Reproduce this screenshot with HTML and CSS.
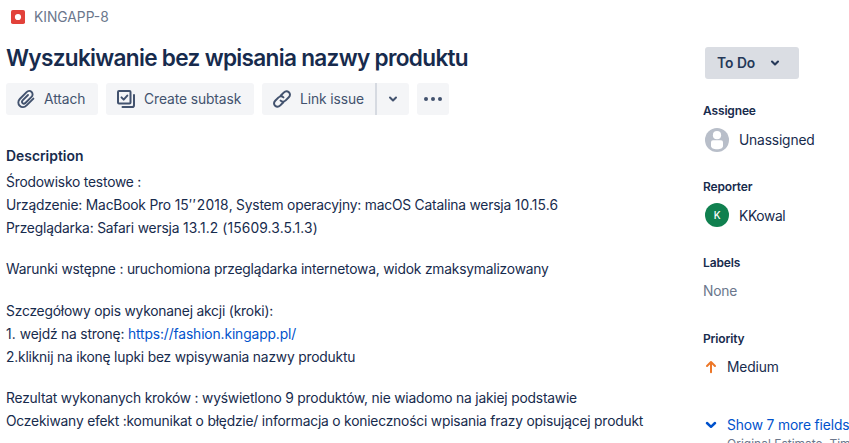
FILE: index.html
```html
<!DOCTYPE html>
<html lang="pl">
<head>
<meta charset="utf-8">
<title>KINGAPP-8</title>
<link rel="stylesheet" href="styles.css">
</head>
<body>
<div class="issue">
  <main class="main">
    <div class="crumb">
      <svg width="14" height="14" viewBox="0 0 14 14"><rect width="14" height="14" rx="1.8" fill="#e2413a"/><circle cx="7" cy="7" r="3.1" fill="#fff"/></svg>
      <span>KINGAPP-8</span>
    </div>
    <h1 class="title">Wyszukiwanie bez wpisania nazwy produktu</h1>
    <div class="toolbar">
      <button class="btn attach">
        <svg width="20" height="20" viewBox="0 0 20 20" fill="none" stroke="#42526e" stroke-width="1.9" stroke-linecap="round" stroke-linejoin="round"><path d="M17.4 9.6 10.6 16.4C8.4 18.6 5.500 18.500 3.700 16.800S1.800 12.100 3.800 10L10.600 3.200C12.100 1.700 14.300 1.700 15.600 3S17 6.400 15.500 7.900L9.400 14C8.500 14.900 7.300 14.900 6.500 14.100S5.800 12.200 6.600 11.400L12 6"/></svg>
        <span>Attach</span>
      </button>
      <button class="btn subtask">
        <svg width="20" height="20" viewBox="0 0 20 20" fill="none" stroke="#42526e" stroke-width="2" stroke-linecap="round" stroke-linejoin="round"><rect x="2" y="2" width="12.500" height="12.500" rx="1"/><path d="m5.500 8.400 2.200 2.200 3.600-4M18 6v10.200a1.800 1.800 0 0 1-1.800 1.800H6.500"/></svg>
        <span>Create subtask</span>
      </button>
      <div class="split">
        <button class="btn link">
          <svg width="20" height="20" viewBox="0 0 20 20" fill="none" stroke="#42526e" stroke-width="2" stroke-linecap="round" stroke-linejoin="round"><path d="M8.600 6.700 11.700 3.600C13.300 2 15.400 1.900 16.900 3.300S18.300 6.800 16.800 8.300L13.700 11.400C12.100 13 10 13 8.600 11.600M11.400 13.300 8.300 16.400C6.700 18 4.600 18.100 3.100 16.700S1.700 13.200 3.200 11.700L6.300 8.600C7.900 7 10 7 11.400 8.400"/></svg>
          <span>Link issue</span>
        </button>
        <button class="btn drop"><svg width="10" height="8" viewBox="0 0 10 8" fill="none" stroke="#42526e" stroke-width="2" stroke-linecap="round" stroke-linejoin="round"><path d="m2 2.500 3 3 3-3"/></svg></button>
      </div>
      <button class="btn more"><svg width="20" height="4" viewBox="0 0 20 4" fill="#42526e"><circle cx="3" cy="2" r="2"/><circle cx="10" cy="2" r="2"/><circle cx="17" cy="2" r="2"/></svg></button>
    </div>
    <h2 class="heading">Description</h2>
    <div class="description">
      <p>Środowisko testowe :<br>Urządzenie: MacBook Pro <span class="num">15<span class="prime">′′</span>2018</span>, System operacyjny: macOS Catalina wersja <span class="num">10.15.6</span><br>Przeglądarka: Safari wersja <span class="num">13.1.2 (15609.3.5.1.3)</span></p>
      <p>Warunki wstępne : uruchomiona przeglądarka internetowa, widok zmaksymalizowany</p>
      <p class="steps">Szczegółowy opis wykonanej akcji (kroki):<br><span class="num">1. </span>wejdź na stronę: <a href="#">https://fashion.kingapp.pl/</a><br>2.kliknij na ikonę lupki bez wpisywania nazwy produktu</p>
      <p>Rezultat wykonanych kroków : wyświetlono 9 produktów, nie wiadomo na jakiej podstawie<br>Oczekiwany efekt :komunikat o błędzie/ informacja o konieczności wpisania frazy opisującej produkt</p>
    </div>
  </main>
  <aside class="side">
    <button class="status"><span>To Do</span><svg width="10" height="8" viewBox="0 0 10 8" fill="none" stroke="#253858" stroke-width="2.100" stroke-linecap="round" stroke-linejoin="round"><path d="m2 2.500 3 3 3-3"/></svg></button>
    <section class="field">
      <h3>Assignee</h3>
      <div class="value person assignee">
        <svg width="24" height="24" viewBox="0 0 24 24"><circle cx="12" cy="12" r="12" fill="#b8bec9"/><circle cx="12" cy="7.200" r="4.100" fill="#fff"/><path d="M6 14.300a2 2 0 0 1 2-2h8a2 2 0 0 1 2 2v3.700c0 2-2.600 3.300-6 3.300S6 20 6 18z" fill="#fff"/></svg>
        <span>Unassigned</span>
      </div>
    </section>
    <section class="field">
      <h3>Reporter</h3>
      <div class="value person"><span class="avatar">K</span><span class="name">KKowal</span></div>
    </section>
    <section class="field">
      <h3>Labels</h3>
      <div class="value none">None</div>
    </section>
    <section class="field">
      <h3>Priority</h3>
      <div class="value priority">
        <svg width="12" height="14" viewBox="0 0 12 14" fill="none" stroke="#ed7728" stroke-width="2" stroke-linecap="round" stroke-linejoin="round"><path d="M6 12.300V2M2 6l4-4 4 4"/></svg>
        <span>Medium</span>
      </div>
    </section>
    <div class="show-more">
      <svg width="12" height="10" viewBox="0 0 12 10" fill="none" stroke="#0052cc" stroke-width="2.500" stroke-linecap="round" stroke-linejoin="round"><path d="m2 3 4 3.800L10 3"/></svg>
      <div><a href="#">Show 7 more fields</a><small>Original Estimate, Time tracking</small></div>
    </div>
  </aside>
</div>
</body>
</html>
```
FILE: styles.css
```css
* { box-sizing: border-box; }
body {
  margin: 0;
  height: 443px;
  overflow: hidden;
  background: #fff;
  color: #172b4d;
  font: 13.8px/20px Inter, "Liberation Sans", sans-serif;
}
h1, h2, h3, p { margin: 0; }
a { color: #0052cc; text-decoration: none; }
button { border: 0; padding: 0; font: inherit; color: inherit; }
svg { display: block; flex: none; }
.issue { display: grid; grid-template-columns: 697px 146px; padding-left: 6px; height: 443px; overflow: hidden; white-space: nowrap; }
.crumb { display: flex; align-items: center; gap: 9px; height: 20px; margin-top: 7px; padding-left: 5px; color: #6b778c; }
.title { margin-top: 16px; height: 30px; font-size: 22.6px; line-height: 30px; font-weight: 570; letter-spacing: -0.69px; }
.toolbar { display: flex; gap: 8px; margin-top: 10px; height: 32px; }
.btn { display: flex; align-items: center; gap: 8px; height: 32px; padding-left: 10px; border-radius: 3px; background: #f4f5f7; color: #42526e; letter-spacing: -0.08px; }
.attach { width: 92px; }
.subtask { width: 148px; }
.split { display: flex; width: 147px; }
.link { width: 113px; border-radius: 3px 0 0 3px; }
.drop { flex: 1; padding: 0; justify-content: center; border-left: 2px solid #d6dae1; border-radius: 0 3px 3px 0; }
.more { width: 32px; padding: 0; justify-content: center; }
.heading { margin-top: 31px; font-size: 13.9px; line-height: 20px; font-weight: 600; }
.description { display: flex; flex-direction: column; gap: 18px; margin-top: 5px; line-height: 23px; letter-spacing: -0.19px; }
.description a { letter-spacing: -0.11px; }
.steps { margin-top: 1px; }
.num { letter-spacing: 0.13px; }
.prime { letter-spacing: 0.900px; }
.side { padding-top: 47px; }
.status { display: flex; align-items: center; gap: 15px; width: 94px; height: 32px; margin-left: 2px; padding-left: 12px; border-radius: 3px; background: #dadde3; color: #253858; font-weight: 600; }
.field { height: 76px; }
.status + .field { margin-top: 24px; }
.field h3 { font-size: 12px; line-height: 16px; font-weight: 600; letter-spacing: -0.15px; }
.value { display: flex; align-items: center; height: 24px; margin-top: 8px; letter-spacing: -0.16px; }
.assignee { margin-top: 9px; }
.person { gap: 10px; padding-left: 2px; }
.name { padding-top: 2px; letter-spacing: -0.35px; }
.avatar { width: 24px; height: 24px; border-radius: 50%; background: #10804f; color: #fff; font-size: 10px; line-height: 24px; font-weight: 500; text-align: center; }
.none { color: #6b778c; }
.priority { gap: 10px; padding-left: 2px; }
.show-more { display: flex; gap: 10px; margin-top: 8px; padding-left: 2px; }
.show-more svg { margin-top: 5px; }
.show-more a, .show-more small { display: block; }
.show-more a { letter-spacing: -0.13px; }
.show-more small { color: #6b778c; font-size: 12px; line-height: 18px; }
```
